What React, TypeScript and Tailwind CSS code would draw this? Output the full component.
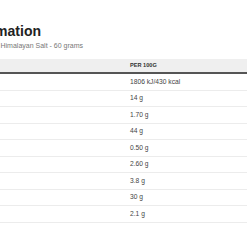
const rows = [
  { label: 'Energy', per100: '1806 kJ/430 kcal', serving: '1084 kJ/258 kcal' },
  { label: 'Fat', per100: '14 g', serving: '8.4 g' },
  { label: 'of which saturates', per100: '1.70 g', serving: '1.02 g' },
  { label: 'Carbohydrate', per100: '44 g', serving: '26 g' },
  { label: 'of which sugars', per100: '0.50 g', serving: '0.30 g' },
  { label: 'Fibre', per100: '2.60 g', serving: '1.56 g' },
  { label: 'Protein', per100: '3.8 g', serving: '2.3 g' },
  { label: 'Starch', per100: '30 g', serving: '18 g' },
  { label: 'Salt', per100: '2.1 g', serving: '1.3 g' },
];

export default function App() {
  return (
    <div className="w-[247px] h-[247px] overflow-hidden bg-white font-['Liberation_Sans',Arial,sans-serif]">
      <div className="pt-[22px]">
        <div className="w-[41px] flex justify-end whitespace-nowrap">
          <h1 className="text-[14px] leading-[18px] font-bold text-[#222]">Nutritional Information</h1>
        </div>
        <div className="w-[83px] flex justify-end whitespace-nowrap mt-[1px]">
          <p className="text-[7px] leading-[9px] text-[#777]">Nutrition facts for Trail Mix with Himalayan Salt - 60 grams</p>
        </div>
      </div>
      <div className="mt-[9px] -ml-[200px] w-[600px]">
        <div className="grid grid-cols-[330px_150px_1fr] h-[15px] bg-[#efefef] border-b-2 border-[#555] items-center">
          <span className="pl-2 text-[5.6px] font-bold uppercase text-[#333]">Nutrient</span>
          <span className="text-[5.6px] font-bold uppercase text-[#333]">Per 100g</span>
          <span className="text-[5.6px] font-bold uppercase text-[#333]">Per serving</span>
        </div>
        {rows.map((r) => (
          <div
            key={r.label}
            className="grid grid-cols-[330px_150px_1fr] h-[16.5px] border-b border-[#ececec] items-center text-[6.7px] text-[#444]"
          >
            <span className="pl-2">{r.label}</span>
            <span>{r.per100}</span>
            <span>{r.serving}</span>
          </div>
        ))}
      </div>
    </div>
  );
}
